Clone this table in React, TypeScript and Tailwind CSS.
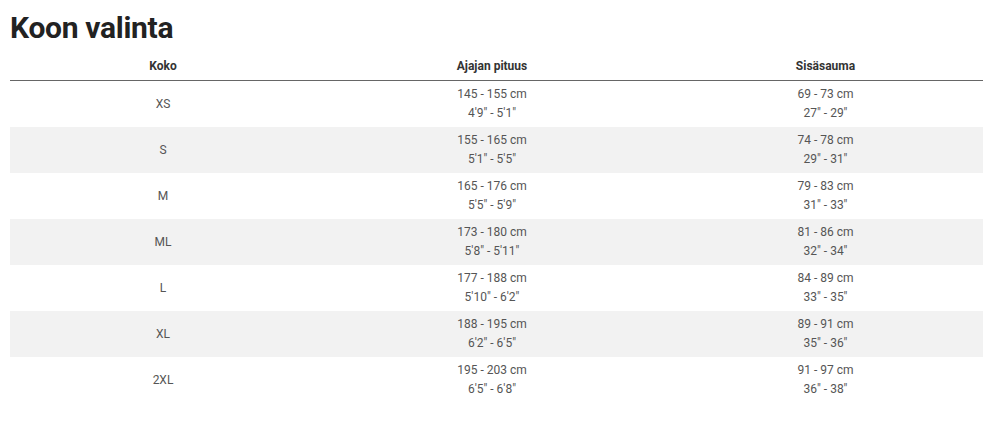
import React from "react"

const rows = [
    { size: "XS", height: ["145 - 155 cm", "4'9\" - 5'1\""], inseam: ["69 - 73 cm", "27\" - 29\""] },
    { size: "S", height: ["155 - 165 cm", "5'1\" - 5'5\""], inseam: ["74 - 78 cm", "29\" - 31\""] },
    { size: "M", height: ["165 - 176 cm", "5'5\" - 5'9\""], inseam: ["79 - 83 cm", "31\" - 33\""] },
    { size: "ML", height: ["173 - 180 cm", "5'8\" - 5'11\""], inseam: ["81 - 86 cm", "32\" - 34\""] },
    { size: "L", height: ["177 - 188 cm", "5'10\" - 6'2\""], inseam: ["84 - 89 cm", "33\" - 35\""] },
    { size: "XL", height: ["188 - 195 cm", "6'2\" - 6'5\""], inseam: ["89 - 91 cm", "35\" - 36\""] },
    { size: "2XL", height: ["195 - 203 cm", "6'5\" - 6'8\""], inseam: ["91 - 97 cm", "36\" - 38\""] },
]

export default function App() {
    return (
        <div className="bg-white w-[1000px] h-[423px] px-[10px] pt-[10px] font-['Roboto',sans-serif]">
            <h1 className="text-[30px] leading-[36px] font-bold tracking-[-0.3px] text-[#222] font-['Roboto',sans-serif]">Koon valinta</h1>

            <div className="w-[973px] mt-[2px]">
                {/* header */}
                <div className="grid grid-cols-[306px_352px_315px] h-[33px] pt-[3px] items-center border-b border-[#666] text-[12px] font-bold text-[#333]">
                    <div className="text-center">Koko</div>
                    <div className="text-center">Ajajan pituus</div>
                    <div className="text-center">Sisäsauma</div>
                </div>

                {rows.map((r, i) => (
                    <div
                        key={r.size}
                        className={`grid grid-cols-[306px_352px_315px] h-[46px] items-center text-[12px] leading-[19px] text-[#555] ${i % 2 === 1 ? "bg-[#f2f2f2]" : "bg-white"}`}
                    >
                        <div className="text-center">{r.size}</div>
                        <div className="text-center">
                            <div>{r.height[0]}</div>
                            <div>{r.height[1]}</div>
                        </div>
                        <div className="text-center">
                            <div>{r.inseam[0]}</div>
                            <div>{r.inseam[1]}</div>
                        </div>
                    </div>
                ))}
            </div>
        </div>
    )
}
